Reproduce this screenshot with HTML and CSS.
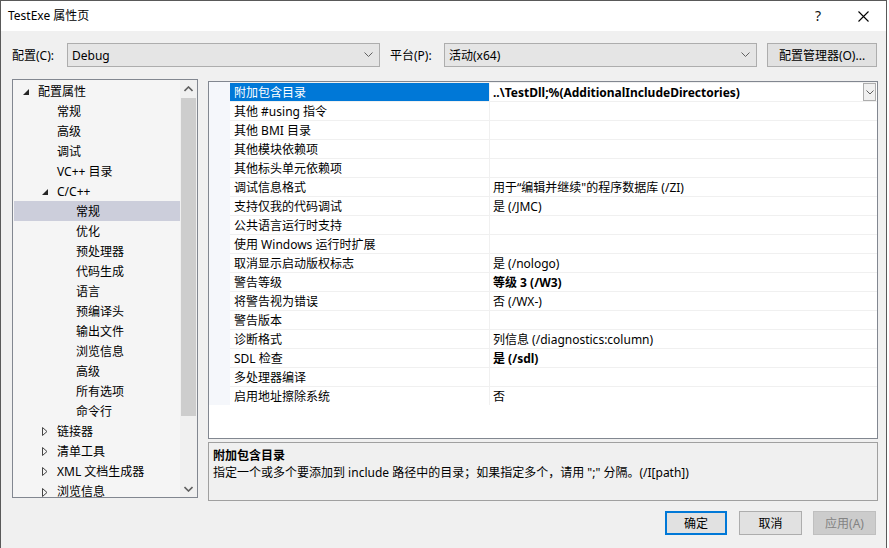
FILE: index.html
```html
<!DOCTYPE html>
<html>
	<head>
		<meta charset="UTF-8">
		<title>TestExe 属性页</title>
		<link rel="stylesheet" href="styles.css">
	</head>
	<body>
		<div class="window">
			<div class="titlebar">
				<span class="title">TestExe 属性页</span>
				<span class="help">?</span>
				<span class="close"><svg width="11" height="11" viewBox="0 0 11 11"><path d="M0.5 0.5L10.5 10.5M10.5 0.5L0.5 10.5" stroke="#000" stroke-width="1.1" fill="none"/></svg></span>
			</div>

			<div class="client">
				<div class="toprow">
					<span class="lbl lbl-conf">配置(C):</span>
					<div class="combo">
						<span>Debug</span>
						<svg class="chev" width="9" height="6" viewBox="0 0 9 6"><path d="M0.5 0.5L4.5 4.5L8.5 0.5" stroke="#606060" fill="none"/></svg>
					</div>
					<span class="lbl lbl-plat">平台(P):</span>
					<div class="combo">
						<span>活动(x64)</span>
						<svg class="chev" width="9" height="6" viewBox="0 0 9 6"><path d="M0.5 0.5L4.5 4.5L8.5 0.5" stroke="#606060" fill="none"/></svg>
					</div>
					<div class="btn btn-mgr">配置管理器(O)...</div>
				</div>

				<div class="main">
					<div class="tree">
						<div class="tree-list">
							<div class="node lv0"><span class="arr"><svg width="6" height="6" viewBox="0 0 6 6"><polygon points="6,0 6,6 0,6" fill="#262626"/></svg></span>配置属性</div>
							<div class="node lv1"><span class="arr"></span>常规</div>
							<div class="node lv1"><span class="arr"></span>高级</div>
							<div class="node lv1"><span class="arr"></span>调试</div>
							<div class="node lv1"><span class="arr"></span>VC++ 目录</div>
							<div class="node lv1"><span class="arr"><svg width="6" height="6" viewBox="0 0 6 6"><polygon points="6,0 6,6 0,6" fill="#262626"/></svg></span>C/C++</div>
							<div class="node lv2 sel"><span class="arr"></span>常规</div>
							<div class="node lv2"><span class="arr"></span>优化</div>
							<div class="node lv2"><span class="arr"></span>预处理器</div>
							<div class="node lv2"><span class="arr"></span>代码生成</div>
							<div class="node lv2"><span class="arr"></span>语言</div>
							<div class="node lv2"><span class="arr"></span>预编译头</div>
							<div class="node lv2"><span class="arr"></span>输出文件</div>
							<div class="node lv2"><span class="arr"></span>浏览信息</div>
							<div class="node lv2"><span class="arr"></span>高级</div>
							<div class="node lv2"><span class="arr"></span>所有选项</div>
							<div class="node lv2"><span class="arr"></span>命令行</div>
							<div class="node lv1"><span class="arr"><svg width="6" height="9" viewBox="0 0 6 9"><polygon points="0.5,0.5 5,4.5 0.5,8.5" fill="none" stroke="#444"/></svg></span>链接器</div>
							<div class="node lv1"><span class="arr"><svg width="6" height="9" viewBox="0 0 6 9"><polygon points="0.5,0.5 5,4.5 0.5,8.5" fill="none" stroke="#444"/></svg></span>清单工具</div>
							<div class="node lv1"><span class="arr"><svg width="6" height="9" viewBox="0 0 6 9"><polygon points="0.5,0.5 5,4.5 0.5,8.5" fill="none" stroke="#444"/></svg></span>XML 文档生成器</div>
							<div class="node lv1 last"><span class="arr"><svg width="6" height="9" viewBox="0 0 6 9"><polygon points="0.5,0.5 5,4.5 0.5,8.5" fill="none" stroke="#444"/></svg></span>浏览信息</div>
						</div>
						<div class="vscroll">
							<div class="sb-btn"><svg width="9" height="6" viewBox="0 0 9 6"><path d="M0.5 5L4.5 1L8.5 5" stroke="#606060" stroke-width="1.6" fill="none"/></svg></div>
							<div class="sb-track"><div class="sb-thumb"></div></div>
							<div class="sb-btn"><svg width="9" height="6" viewBox="0 0 9 6"><path d="M0.5 1L4.5 5L8.5 1" stroke="#606060" stroke-width="1.6" fill="none"/></svg></div>
						</div>
					</div>

					<div class="right">
						<div class="grid">
							<div class="row">
								<div class="gut"></div>
								<div class="name sel">附加包含目录</div>
								<div class="val b">..\TestDll;%(AdditionalIncludeDirectories)<span class="dd"><svg width="8" height="5" viewBox="0 0 8 5"><path d="M0.5 0.5L4 4L7.5 0.5" stroke="#606060" fill="none"/></svg></span></div>
							</div>
							<div class="row"><div class="gut"></div><div class="name">其他 #using 指令</div><div class="val"></div></div>
							<div class="row"><div class="gut"></div><div class="name">其他 BMI 目录</div><div class="val"></div></div>
							<div class="row"><div class="gut"></div><div class="name">其他模块依赖项</div><div class="val"></div></div>
							<div class="row"><div class="gut"></div><div class="name">其他标头单元依赖项</div><div class="val"></div></div>
							<div class="row"><div class="gut"></div><div class="name">调试信息格式</div><div class="val">用于“编辑并继续"的程序数据库 (/ZI)</div></div>
							<div class="row"><div class="gut"></div><div class="name">支持仅我的代码调试</div><div class="val">是 (/JMC)</div></div>
							<div class="row"><div class="gut"></div><div class="name">公共语言运行时支持</div><div class="val"></div></div>
							<div class="row"><div class="gut"></div><div class="name">使用 Windows 运行时扩展</div><div class="val"></div></div>
							<div class="row"><div class="gut"></div><div class="name">取消显示启动版权标志</div><div class="val">是 (/nologo)</div></div>
							<div class="row"><div class="gut"></div><div class="name">警告等级</div><div class="val b">等级 3 (/W3)</div></div>
							<div class="row"><div class="gut"></div><div class="name">将警告视为错误</div><div class="val">否 (/WX-)</div></div>
							<div class="row"><div class="gut"></div><div class="name">警告版本</div><div class="val"></div></div>
							<div class="row"><div class="gut"></div><div class="name">诊断格式</div><div class="val">列信息 (/diagnostics:column)</div></div>
							<div class="row"><div class="gut"></div><div class="name">SDL 检查</div><div class="val b">是 (/sdl)</div></div>
							<div class="row"><div class="gut"></div><div class="name">多处理器编译</div><div class="val"></div></div>
							<div class="row"><div class="gut"></div><div class="name">启用地址擦除系统</div><div class="val">否</div></div>
						</div>
						<div class="desc">
							<div class="desc-title">附加包含目录</div>
							<div class="desc-text">指定一个或多个要添加到 include 路径中的目录；如果指定多个，请用 ";" 分隔。(/I[path])</div>
						</div>
					</div>
				</div>

				<div class="btnrow">
					<div class="btn btn-ok">确定</div>
					<div class="btn btn-cancel">取消</div>
					<div class="btn btn-off">应用(A)</div>
				</div>
			</div>
		</div>
	</body>
</html>
```

FILE: styles.css
```css
*{margin: 0;padding: 0;box-sizing: border-box;}
body{background: #fff;font-family: "Noto Sans", "Noto Sans CJK SC", sans-serif;font-size: 12px;color: #000;}
.window{width: 887px;height: 548px;border: 1px solid #595959;border-bottom: none;display: flex;flex-direction: column;background: #f0f0f0;}

.titlebar{height: 30px;background: #fff;display: flex;align-items: center;padding-left: 7px;}
.title{flex: 1;line-height: 16px;}
.help{width: 14px;font-size: 14px;line-height: 16px;margin-right: 29px;color: #111;}
.close{width: 11px;height: 11px;margin-right: 17px;display: flex;}

.client{flex: 1;display: flex;flex-direction: column;}
.toprow{display: flex;align-items: center;height: 24px;margin-top: 12px;padding-left: 11px;}
.lbl{line-height: 24px;padding-top: 1px;}
.lbl-conf{width: 55px;}
.lbl-plat{width: 54px;margin-left: 10px;}
.combo{width: 313px;height: 24px;background: #e5e5e5;border: 1px solid #adadad;display: flex;align-items: center;padding: 0 6px 0 4px;}
.combo span{flex: 1;line-height: 16px;padding-top: 1px;}
.chev{display: block;}
.btn{height: 24px;border: 1px solid #adadad;background: #e1e1e1;display: flex;align-items: center;justify-content: center;line-height: 16px;}
.btn-mgr{width: 110px;margin-left: 10px;padding-top: 1px;}

.main{display: flex;margin-top: 12px;padding-left: 11px;}
.tree{width: 186px;height: 419px;border: 1px solid #828790;background: #f5f5f5;display: flex;overflow: hidden;}
.tree-list{flex: 1;padding: 1px 0 0 1px;overflow: hidden;}
.node{height: 20px;display: flex;align-items: center;white-space: nowrap;line-height: 16px;padding-top: 1px;}
.node.lv0{padding-left: 9px;}
.node.lv1{padding-left: 28px;}
.node.lv2{padding-left: 47px;}
.node.sel{background: #cccedb;}
.node.last{height: 17px;overflow: hidden;align-items: flex-start;padding-top: 3px;}
.arr{width: 15px;height: 16px;display: flex;align-items: center;flex-shrink: 0;}
.arr svg{display: block;}
.vscroll{width: 17px;background: #f0f0f0;display: flex;flex-direction: column;}
.sb-btn{height: 17px;display: flex;align-items: center;justify-content: center;}
.sb-track{flex: 1;}
.sb-thumb{height: 318px;margin-top: 1px;margin-left: 1px;width: 15px;background: #cdcdcd;}

.right{width: 670px;margin-left: 10px;margin-top: 2px;display: flex;flex-direction: column;}
.grid{height: 358px;border: 1px solid #828790;background: #fff;}
.row{display: grid;grid-template-columns: 21px 259px 388px;height: 19px;}
.gut{background: #f5f7fb;}
.name,.val{border-top: 1px solid #f0f0f0;line-height: 17px;padding-top: 1px;padding-left: 4px;white-space: nowrap;overflow: hidden;}
.val{padding-left: 3px;border-left: 1px solid #f0f0f0;position: relative;}
.name.sel{background: #0078d7;color: #fff;}
.b{font-weight: bold;}
.dd{position: absolute;right: 1px;top: 0;width: 13px;height: 18px;border: 1px solid #adadad;background: #f0f0f0;display: flex;align-items: center;justify-content: center;}

.desc{height: 59px;margin-top: 3px;border: 1px solid #a0a0a0;padding: 4px 4px 0 4px;}
.desc-title{font-weight: bold;line-height: 17px;}
.desc-text{line-height: 17px;}

.btnrow{display: flex;justify-content: flex-end;margin-top: 10px;padding-right: 10px;}
.btnrow .btn{width: 63px;padding-top: 1px;}
.btnrow .btn-ok{width: 62px;}
.btn-cancel{margin-left: 12px;}
.btn-off{margin-left: 11px;}
.btn-ok{border: 2px solid #0078d7;}
.btn-off{background: #cccccc;border-color: #bfbfbf;color: #838383;}
```
